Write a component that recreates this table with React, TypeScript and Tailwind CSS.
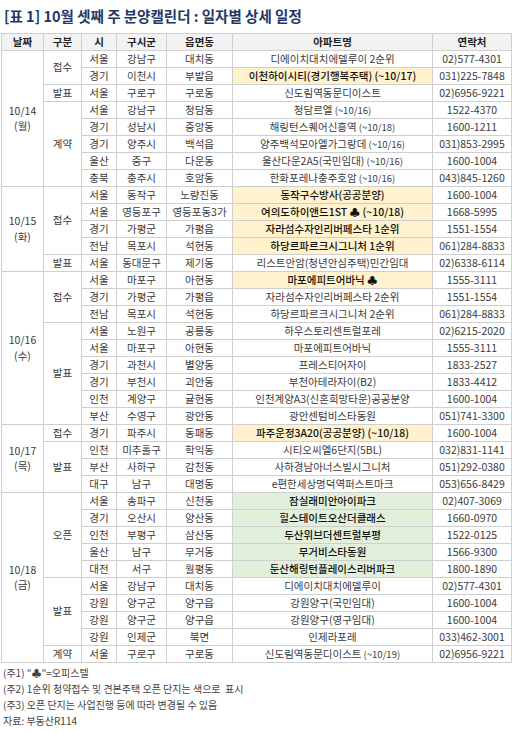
type Row = {
  si: string;
  gu: string;
  dong: string;
  name: string;
  note?: string;
  tel: string;
  hl?: "y" | "g";
};

type Section = { kind: string; rows: Row[] };
type Day = { date: string; dow: string; sections: Section[] };

const days: Day[] = [
  {
    date: "10/14",
    dow: "(월)",
    sections: [
      {
        kind: "접수",
        rows: [
          { si: "서울", gu: "강남구", dong: "대치동", name: "디에이치대치에델루이 2순위", tel: "02)577-4301" },
          { si: "경기", gu: "이천시", dong: "부발읍", name: "이천하이시티(경기행복주택) (~10/17)", tel: "031)225-7848", hl: "y" },
        ],
      },
      {
        kind: "발표",
        rows: [{ si: "서울", gu: "구로구", dong: "구로동", name: "신도림역동문디이스트", tel: "02)6956-9221" }],
      },
      {
        kind: "계약",
        rows: [
          { si: "서울", gu: "강남구", dong: "청담동", name: "청담르엘", note: "(~10/16)", tel: "1522-4370" },
          { si: "경기", gu: "성남시", dong: "중앙동", name: "해링턴스퀘어신흥역", note: "(~10/18)", tel: "1600-1211" },
          { si: "경기", gu: "양주시", dong: "백석읍", name: "양주백석모아엘가그랑데", note: "(~10/16)", tel: "031)853-2995" },
          { si: "울산", gu: "중구", dong: "다운동", name: "울산다운2A5(국민임대)", note: "(~10/16)", tel: "1600-1004" },
          { si: "충북", gu: "충주시", dong: "호암동", name: "한화포레나충주호암", note: "(~10/16)", tel: "043)845-1260" },
        ],
      },
    ],
  },
  {
    date: "10/15",
    dow: "(화)",
    sections: [
      {
        kind: "접수",
        rows: [
          { si: "서울", gu: "동작구", dong: "노량진동", name: "동작구수방사(공공분양)", tel: "1600-1004", hl: "y" },
          { si: "서울", gu: "영등포구", dong: "영등포동3가", name: "여의도하이앤드1ST ♣ (~10/18)", tel: "1668-5995", hl: "y" },
          { si: "경기", gu: "가평군", dong: "가평읍", name: "자라섬수자인리버페스타 1순위", tel: "1551-1554", hl: "y" },
          { si: "전남", gu: "목포시", dong: "석현동", name: "하당르파르크시그니처 1순위", tel: "061)284-8833", hl: "y" },
        ],
      },
      {
        kind: "발표",
        rows: [{ si: "서울", gu: "동대문구", dong: "제기동", name: "리스트안암(청년안심주택)민간임대", tel: "02)6338-6114" }],
      },
    ],
  },
  {
    date: "10/16",
    dow: "(수)",
    sections: [
      {
        kind: "접수",
        rows: [
          { si: "서울", gu: "마포구", dong: "아현동", name: "마포에피트어바닉 ♣", tel: "1555-3111", hl: "y" },
          { si: "경기", gu: "가평군", dong: "가평읍", name: "자라섬수자인리버페스타 2순위", tel: "1551-1554" },
          { si: "전남", gu: "목포시", dong: "석현동", name: "하당르파르크시그니처 2순위", tel: "061)284-8833" },
        ],
      },
      {
        kind: "발표",
        rows: [
          { si: "서울", gu: "노원구", dong: "공릉동", name: "하우스토리센트럴포레", tel: "02)6215-2020" },
          { si: "서울", gu: "마포구", dong: "아현동", name: "마포에피트어바닉", tel: "1555-3111" },
          { si: "경기", gu: "과천시", dong: "별양동", name: "프레스티어자이", tel: "1833-2527" },
          { si: "경기", gu: "부천시", dong: "괴안동", name: "부천아테라자이(B2)", tel: "1833-4412" },
          { si: "인천", gu: "계양구", dong: "귤현동", name: "인천계양A3(신혼희망타운)공공분양", tel: "1600-1004" },
          { si: "부산", gu: "수영구", dong: "광안동", name: "광안센텀비스타동원", tel: "051)741-3300" },
        ],
      },
    ],
  },
  {
    date: "10/17",
    dow: "(목)",
    sections: [
      {
        kind: "접수",
        rows: [{ si: "경기", gu: "파주시", dong: "동패동", name: "파주운정3A20(공공분양) (~10/18)", tel: "1600-1004", hl: "y" }],
      },
      {
        kind: "발표",
        rows: [
          { si: "인천", gu: "미추홀구", dong: "학익동", name: "시티오씨엘6단지(5BL)", tel: "032)831-1141" },
          { si: "부산", gu: "사하구", dong: "감천동", name: "사하경남아너스빌시그니처", tel: "051)292-0380" },
          { si: "대구", gu: "남구", dong: "대명동", name: "e편한세상명덕역퍼스트마크", tel: "053)656-8429" },
        ],
      },
    ],
  },
  {
    date: "10/18",
    dow: "(금)",
    sections: [
      {
        kind: "오픈",
        rows: [
          { si: "서울", gu: "송파구", dong: "신천동", name: "잠실래미안아이파크", tel: "02)407-3069", hl: "g" },
          { si: "경기", gu: "오산시", dong: "양산동", name: "힐스테이트오산더클래스", tel: "1660-0970", hl: "g" },
          { si: "인천", gu: "부평구", dong: "삼산동", name: "두산위브더센트럴부평", tel: "1522-0125", hl: "g" },
          { si: "울산", gu: "남구", dong: "무거동", name: "무거비스타동원", tel: "1566-9300", hl: "g" },
          { si: "대전", gu: "서구", dong: "월평동", name: "둔산해링턴플레이스리버파크", tel: "1800-1890", hl: "g" },
        ],
      },
      {
        kind: "발표",
        rows: [
          { si: "서울", gu: "강남구", dong: "대치동", name: "디에이치대치에델루이", tel: "02)577-4301" },
          { si: "강원", gu: "양구군", dong: "양구읍", name: "강원양구(국민임대)", tel: "1600-1004" },
          { si: "강원", gu: "양구군", dong: "양구읍", name: "강원양구(영구임대)", tel: "1600-1004" },
          { si: "강원", gu: "인제군", dong: "북면", name: "인제라포레", tel: "033)462-3001" },
        ],
      },
      {
        kind: "계약",
        rows: [{ si: "서울", gu: "구로구", dong: "구로동", name: "신도림역동문디이스트", note: "(~10/19)", tel: "02)6956-9221" }],
      },
    ],
  },
];

const td = "border border-[#cfcfcf] p-0 h-[17px] text-center align-middle whitespace-nowrap leading-none";

export default function App() {
  return (
    <div
      className="w-[512px] h-[734px] bg-white text-[#3b3b3b] overflow-hidden"
      style={{ fontFamily: '"Noto Sans CJK KR", "Noto Sans", sans-serif' }}
    >
      <div className="h-[33px] flex items-center pl-[4px] pb-[2px]">
        <h1 className="text-[14.5px] font-bold text-[#1f3864]">
          [표 1] 10월 셋째 주 분양캘린더 : 일자별 상세 일정
        </h1>
      </div>

      <table className="ml-[1px] w-[510px] table-fixed border-collapse text-[10.5px]">
        <colgroup>
          <col className="w-[42px]" />
          <col className="w-[38px]" />
          <col className="w-[35px]" />
          <col className="w-[50px]" />
          <col className="w-[66px]" />
          <col className="w-[200px]" />
          <col className="w-[79px]" />
        </colgroup>
        <thead>
          <tr className="bg-[#f2f2f2] text-[#222]">
            {["날짜", "구분", "시", "구시군", "읍면동", "아파트명", "연락처"].map((h) => (
              <th key={h} className={`${td} font-bold`}>
                {h}
              </th>
            ))}
          </tr>
        </thead>
        <tbody>
          {days.map((day) => {
            const total = day.sections.reduce((n, s) => n + s.rows.length, 0);
            return day.sections.map((sec, si) =>
              sec.rows.map((r, ri) => (
                <tr key={`${day.date}-${si}-${ri}`}>
                  {si === 0 && ri === 0 && (
                    <td rowSpan={total} className={td}>
                      <div className="flex flex-col items-center gap-[5px]">
                        <span>{day.date}</span>
                        <span>{day.dow}</span>
                      </div>
                    </td>
                  )}
                  {ri === 0 && (
                    <td rowSpan={sec.rows.length} className={td}>
                      {sec.kind}
                    </td>
                  )}
                  <td className={td}>{r.si}</td>
                  <td className={td}>{r.gu}</td>
                  <td className={td}>{r.dong}</td>
                  <td
                    className={`${td} ${
                      r.hl === "y"
                        ? "bg-[#fff2cc] text-[#111] font-medium"
                        : r.hl === "g"
                        ? "bg-[#e2efda] text-[#111] font-medium"
                        : ""
                    }`}
                  >
                    {r.name}
                    {r.note && <span className="text-[9.5px]"> {r.note}</span>}
                  </td>
                  <td className={td}>{r.tel}</td>
                </tr>
              ))
            );
          })}
        </tbody>
      </table>

      <div className="pl-[3px] pt-[2px] text-[10px] text-[#444] leading-[16px]">
        <p>(주1) "♣"=오피스텔</p>
        <p>(주2) 1순위 청약접수 및 견본주택 오픈 단지는 색으로&nbsp; 표시</p>
        <p>(주3) 오픈 단지는 사업진행 등에 따라 변경될 수 있음</p>
        <p>자료: 부동산R114</p>
      </div>
    </div>
  );
}
